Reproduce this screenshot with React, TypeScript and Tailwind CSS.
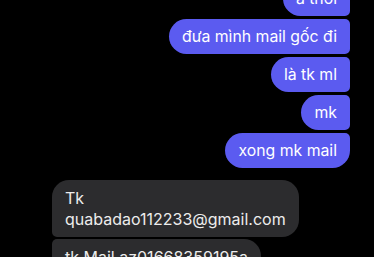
import React from 'react';

const sent = [
  { text: 'à thôi', first: true },
  { text: 'đưa mình mail gốc đi' },
  { text: 'là tk ml' },
  { text: 'mk' },
  { text: 'xong mk mail', last: true },
];

export default function App() {
  return (
    <div
      className="w-[374px] h-[257px] overflow-hidden bg-black"
      style={{ fontFamily: 'Inter, "Noto Sans", sans-serif' }}
    >
      <div className="flex flex-col items-end gap-[3px] pr-[24px] mt-[-19px]">
        {sent.map((m) => (
          <div
            key={m.text}
            className={
              'bg-[#5b5bf0] text-white text-[15.8px] leading-[21px] px-[13px] py-[7px] rounded-l-[17.5px] ' +
              (m.first ? 'rounded-tr-[17.5px] ' : 'rounded-tr-[5px] ') +
              (m.last ? 'rounded-br-[17.5px]' : 'rounded-br-[5px]')
            }
          >
            {m.text}
          </div>
        ))}
      </div>

      <div className="flex flex-col items-start gap-[2px] pl-[52px] mt-[12px]">
        <div className="bg-[#2c2c2e] text-[#ececec] text-[16px] leading-[21px] px-[13px] py-[7.5px] rounded-r-[17px] rounded-tl-[17px] rounded-bl-[5px]">
          Tk
          <br />
          quabadao112233@gmail.com
        </div>
        <div className="bg-[#2c2c2e] text-[#ececec] text-[16px] leading-[21px] px-[13px] py-[7.5px] rounded-r-[17px] rounded-tl-[5px]">
          tk Mail az01668359195a
        </div>
      </div>
    </div>
  );
}
